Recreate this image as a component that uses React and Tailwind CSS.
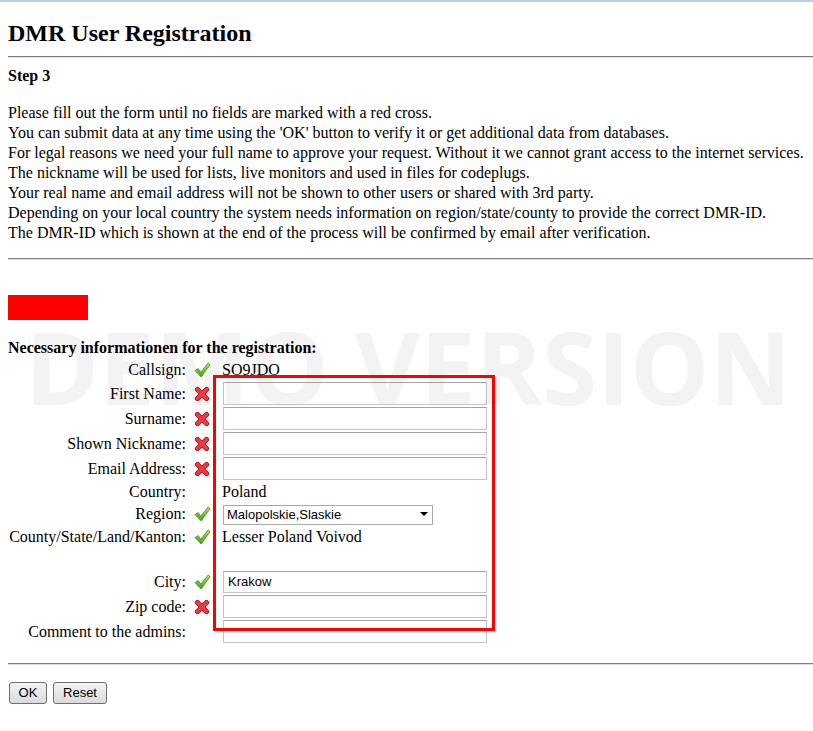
import { useState } from "react";

function CheckIcon() {
    return (
        <svg width="17" height="16" viewBox="0 0 17 16">
            <defs>
                <linearGradient id="chk" x1="0" y1="0" x2="0" y2="1">
                    <stop offset="0" stopColor="#b4ec5c" />
                    <stop offset="1" stopColor="#3f9c14" />
                </linearGradient>
            </defs>
            <path d="M1 8.6 L4.2 6.6 L6.8 10.2 L14.2 1 L16 2.6 L7.2 15 Z" fill="url(#chk)" stroke="#3d8a18" strokeWidth="0.8" strokeLinejoin="round" />
        </svg>
    );
}

function CrossIcon() {
    return (
        <svg width="16" height="16" viewBox="0 0 16 16">
            <g strokeLinecap="round">
                <line x1="3.5" y1="3.5" x2="12.5" y2="12.5" stroke="#a8141c" strokeWidth="5.2" />
                <line x1="12.5" y1="3.5" x2="3.5" y2="12.5" stroke="#a8141c" strokeWidth="5.2" />
                <line x1="3.5" y1="3.5" x2="12.5" y2="12.5" stroke="#ee3a44" strokeWidth="3.6" />
                <line x1="12.5" y1="3.5" x2="3.5" y2="12.5" stroke="#ee3a44" strokeWidth="3.6" />
            </g>
        </svg>
    );
}

function Row({ label, icon, h, children }) {
    return (
        <div className={"flex flex-row items-center " + h}>
            <div className="w-[178px] text-right">{label}</div>
            <div className="w-[32px] flex justify-center">
                {icon === "ok" ? <CheckIcon /> : icon === "bad" ? <CrossIcon /> : null}
            </div>
            <div className="pl-[4px] flex items-center">{children}</div>
        </div>
    );
}

function TextInput({ value, h = "h-[23px]" }) {
    const [val, setVal] = useState(value || "");
    return (
        <input
            type="text"
            value={val}
            onChange={(e) => setVal(e.target.value)}
            className={"ml-[1px] w-[264px] " + h + " bg-transparent border border-[#c4c4c4] border-t-[#a4a4a4] px-[4px] text-[13px] text-black font-['Liberation_Sans',Arial,sans-serif] outline-none"}
        />
    );
}

function Hr() {
    return <div className="h-[2px] border-t border-t-[#7f7f7f] border-b border-b-[#dedede]"></div>;
}

export default function App() {
    const lines = [
        "Please fill out the form until no fields are marked with a red cross.",
        "You can submit data at any time using the 'OK' button to verify it or get additional data from databases.",
        "For legal reasons we need your full name to approve your request. Without it we cannot grant access to the internet services.",
        "The nickname will be used for lists, live monitors and used in files for codeplugs.",
        "Your real name and email address will not be shown to other users or shared with 3rd party.",
        "Depending on your local country the system needs information on region/state/county to provide the correct DMR-ID.",
        "The DMR-ID which is shown at the end of the process will be confirmed by email after verification.",
    ];

    return (
        <div className="relative min-h-[731px] bg-white text-black font-['Liberation_Serif','Times_New_Roman',serif] text-[16px] overflow-hidden">
            <div className="h-[2px] bg-[#bccde6]"></div>

            {/* watermark */}
            <div className="absolute left-[25px] top-[306px] text-[100px] leading-[120px] font-bold text-[#f3f3f3] font-['Open_Sans',sans-serif] whitespace-nowrap pointer-events-none select-none">
                DEMO VERSION
            </div>

            <div className="relative pl-[8px]">
                <h1 className="mt-[17px] text-[24px] leading-[28px] font-bold">DMR User Registration</h1>
                <div className="mt-[9px]"><Hr /></div>
                <h4 className="mt-[9px] font-bold leading-[18px]">Step 3</h4>
                <div className="mt-[18px] leading-[20px]">
                    {lines.map((l) => (
                        <div key={l} className="whitespace-nowrap">{l}</div>
                    ))}
                </div>
                <div className="mt-[15px]"><Hr /></div>
                <div className="mt-[35px] w-[80px] h-[25px] bg-[#ff0000]"></div>
                <div className="mt-[18px] font-bold leading-[20px]">Necessary informationen for the registration:</div>

                <div className="leading-[20px]">
                    <Row label="Callsign:" icon="ok" h="h-[23px]">SO9JDO</Row>
                    <Row label="First Name:" icon="bad" h="h-[25px]"><TextInput /></Row>
                    <Row label="Surname:" icon="bad" h="h-[25px]"><TextInput /></Row>
                    <Row label="Shown Nickname:" icon="bad" h="h-[25px]"><TextInput /></Row>
                    <Row label="Email Address:" icon="bad" h="h-[25px]"><TextInput /></Row>
                    <Row label="Country:" h="h-[22px]">Poland</Row>
                    <Row label="Region:" icon="ok" h="h-[22px]">
                        <div className="relative ml-[1px]">
                            <select className="appearance-none w-[210px] h-[20px] bg-white border border-[#a9a9a9] pl-[3px] text-[13px] leading-[18px] font-['Liberation_Sans',Arial,sans-serif] outline-none">
                                <option>Malopolskie,Slaskie</option>
                            </select>
                            <div className="absolute right-[5px] top-[8px] w-0 h-0 border-l-[4px] border-r-[4px] border-t-[4px] border-l-transparent border-r-transparent border-t-black pointer-events-none"></div>
                        </div>
                    </Row>
                    <Row label="County/State/Land/Kanton:" icon="ok" h="h-[23px]">Lesser Poland Voivod</Row>
                    <div className="h-[21px]"></div>
                    <Row label="City:" icon="ok" h="h-[25px]"><TextInput value="Krakow" h="h-[22px]" /></Row>
                    <Row label="Zip code:" icon="bad" h="h-[25px]"><TextInput /></Row>
                    <Row label="Comment to the admins:" h="h-[25px]"><TextInput /></Row>
                </div>

                <div className="mt-[19px]"><Hr /></div>
                <div className="mt-[17px] flex flex-row gap-[6px] pl-[1px] font-['Liberation_Sans',Arial,sans-serif] text-[13px]">
                    <button className="w-[38px] h-[22px] border border-[#707070] rounded-[3px] bg-gradient-to-b from-[#f4f4f4] to-[#dadada]">OK</button>
                    <button className="w-[54px] h-[22px] border border-[#707070] rounded-[3px] bg-gradient-to-b from-[#f4f4f4] to-[#dadada]">Reset</button>
                </div>
            </div>

            {/* highlight frame */}
            <div className="absolute left-[213px] top-[375px] w-[282px] h-[256px] border-[3px] border-[#ff0000] pointer-events-none"></div>
        </div>
    );
}
